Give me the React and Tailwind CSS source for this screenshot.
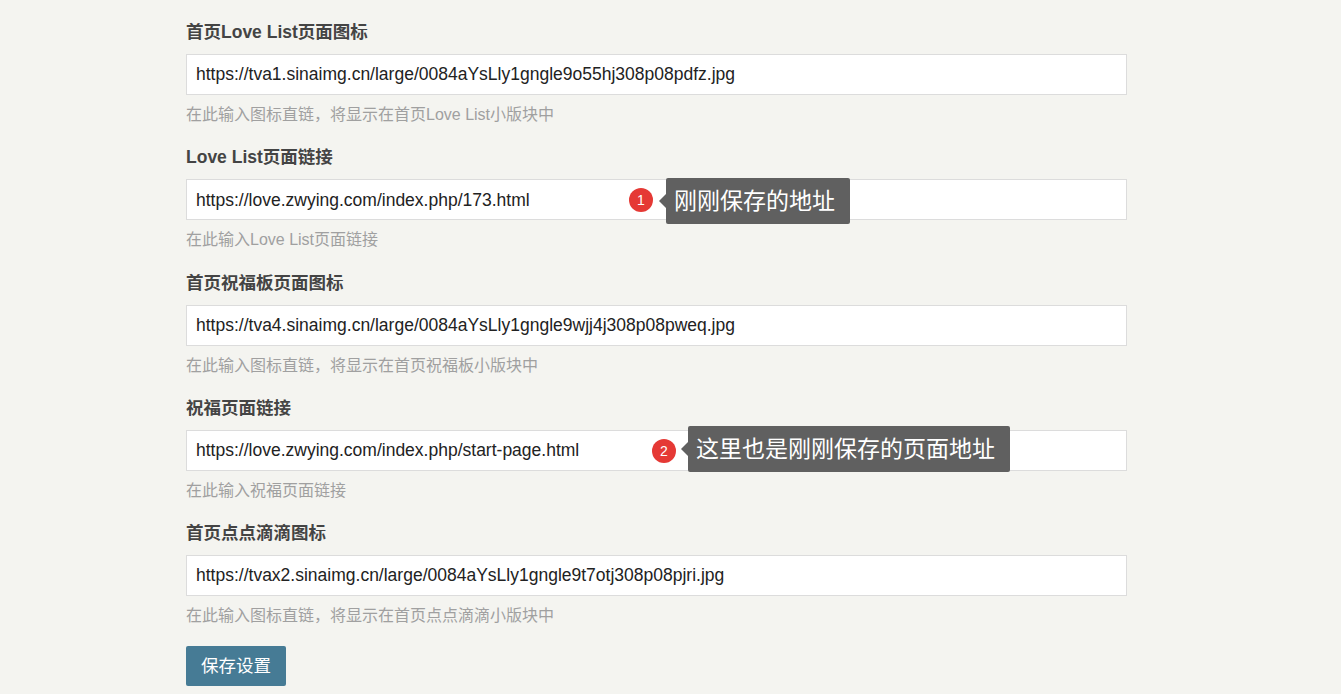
import React from 'react';

const fields = [
  {
    label: '首页Love List页面图标',
    value: 'https://tva1.sinaimg.cn/large/0084aYsLly1gngle9o55hj308p08pdfz.jpg',
    help: '在此输入图标直链，将显示在首页Love List小版块中',
  },
  {
    label: 'Love List页面链接',
    value: 'https://love.zwying.com/index.php/173.html',
    help: '在此输入Love List页面链接',
    note: { n: '1', text: '刚刚保存的地址', badge: 'left-[443px]', box: 'left-[480px] -top-[1px]' },
  },
  {
    label: '首页祝福板页面图标',
    value: 'https://tva4.sinaimg.cn/large/0084aYsLly1gngle9wjj4j308p08pweq.jpg',
    help: '在此输入图标直链，将显示在首页祝福板小版块中',
  },
  {
    label: '祝福页面链接',
    value: 'https://love.zwying.com/index.php/start-page.html',
    help: '在此输入祝福页面链接',
    note: { n: '2', text: '这里也是刚刚保存的页面地址', badge: 'left-[466px]', box: 'left-[502px] -top-[4px]' },
  },
  {
    label: '首页点点滴滴图标',
    value: 'https://tvax2.sinaimg.cn/large/0084aYsLly1gngle9t7otj308p08pjri.jpg',
    help: '在此输入图标直链，将显示在首页点点滴滴小版块中',
  },
];

const Note = ({ note }) => (
  <>
    <span className={`absolute top-[9px] ${note.badge} w-[24px] h-[24px] rounded-full bg-[#e53935] text-white text-[14px] leading-[24px] text-center`}>
      {note.n}
    </span>
    <div className={`absolute ${note.box} h-[46px] pl-[8px] pr-[15px] flex items-center bg-[#606060] rounded-[2px] text-white text-[23px] whitespace-nowrap`}>
      <span className="absolute -left-[7px] top-[16px] w-0 h-0 border-y-[7px] border-y-transparent border-r-[7px] border-r-[#606060]"></span>
      {note.text}
    </div>
  </>
);

export default function App() {
  return (
    <div
      className="min-h-screen bg-[#f4f4f0] pl-[186px] pt-[20px] pb-[20px]"
      style={{ fontFamily: '"Liberation Sans", "Noto Sans CJK SC", sans-serif' }}
    >
      <div className="w-[941px]">
        {fields.map((f) => (
          <div key={f.label} className="mb-[20.25px]">
            <div className="h-[24px] text-[17.5px] leading-[24px] font-bold text-[#444] mb-[10px]">{f.label}</div>
            <div className="relative">
              <div className="h-[41px] bg-white border border-[#dcdcdc] px-[9px] flex items-center text-[17.5px] text-[#222]">
                {f.value}
              </div>
              {f.note && <Note note={f.note} />}
            </div>
            <div className="h-[20px] mt-[10px] text-[16px] leading-[20px] text-[#a0a0a0]">{f.help}</div>
          </div>
        ))}
        <button className="w-[100px] h-[40px] bg-[#467b95] rounded-[2px] text-white text-[17.5px]">保存设置</button>
      </div>
    </div>
  );
}
